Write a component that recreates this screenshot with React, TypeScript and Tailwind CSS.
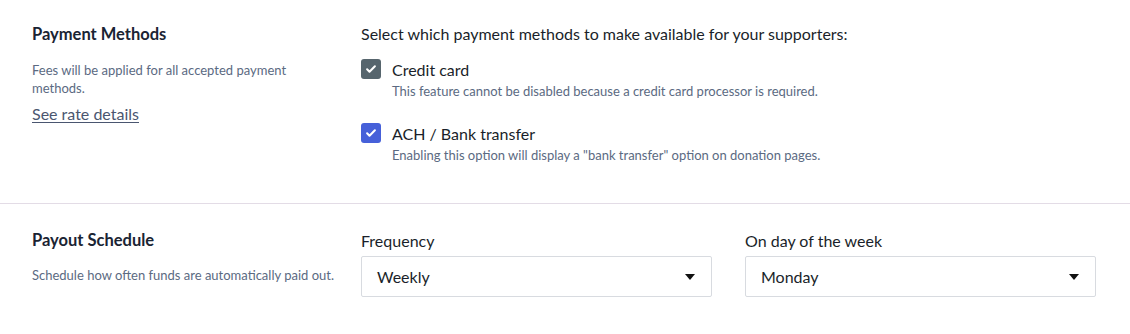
const font = { fontFamily: "'Lato', 'Liberation Sans', sans-serif" }

function CheckIcon() {
  return (
    <svg viewBox="0 0 20 20" className="w-3 h-3" fill="none">
      <path d="M3.5 10.5l4 4 9-9" stroke="white" strokeWidth="3.4" strokeLinecap="round" strokeLinejoin="round" />
    </svg>
  )
}

function Checkbox({ label, help, disabled }: { label: string; help: string; disabled?: boolean }) {
  return (
    <div className="flex gap-[11px]">
      <div
        className={`w-5 h-5 rounded-[3px] flex items-center justify-center shrink-0 ${
          disabled ? "bg-[#56656d]" : "bg-[#4660d9]"
        }`}
      >
        <CheckIcon />
      </div>
      <div>
        <div className="text-[16px] leading-[22px] text-[#1a1f2a]">{label}</div>
        <div className="text-[13px] leading-4 text-[#5b6a82] mt-[2px]">{help}</div>
      </div>
    </div>
  )
}

function Select({ label, value }: { label: string; value: string }) {
  return (
    <div className="flex-1">
      <div className="text-[16px] leading-5 text-[#1a1f2a] mb-[5px]">{label}</div>
      <div className="h-[41px] border border-[#d8dbe0] rounded-[2px] flex items-center justify-between pl-[15px] pr-[16px] bg-white">
        <span className="text-[16px] text-[#1a1f2a]">{value}</span>
        <svg viewBox="0 0 10 6" className="w-[10px] h-[6px]">
          <path d="M0 0h10L5 6z" fill="#111" />
        </svg>
      </div>
    </div>
  )
}

export default function App() {
  return (
    <div className="w-[1130px] h-[334px] bg-white overflow-hidden" style={font}>
      <div className="flex pt-[24px] pb-[40px]">
        <div className="w-[361px] pl-8 pr-8">
          <h2 className="text-[16.5px] leading-5 font-bold text-[#1a2433]">Payment Methods</h2>
          <p className="text-[13px] leading-[18px] text-[#5b6a82] mt-[17px] w-[270px]">
            Fees will be applied for all accepted payment methods.
          </p>
          <a className="inline-block mt-[7px] text-[16px] leading-5 text-[#4a5670] underline underline-offset-2">
            See rate details
          </a>
        </div>
        <div className="flex-1">
          <div className="text-[16px] leading-5 text-[#1a1f2a]">
            Select which payment methods to make available for your supporters:
          </div>
          <div className="mt-[15px] flex flex-col gap-[24px]">
            <Checkbox
              label="Credit card"
              help="This feature cannot be disabled because a credit card processor is required."
              disabled
            />
            <Checkbox
              label="ACH / Bank transfer"
              help='Enabling this option will display a "bank transfer" option on donation pages.'
            />
          </div>
        </div>
      </div>
      <div className="border-t border-[#e3dce6]" />
      <div className="flex pt-[26px]">
        <div className="w-[361px] pl-8 pr-4">
          <h2 className="text-[16.5px] leading-5 font-bold text-[#1a2433]">Payout Schedule</h2>
          <p className="text-[13px] leading-[18px] text-[#5b6a82] mt-[16px]">
            Schedule how often funds are automatically paid out.
          </p>
        </div>
        <div className="w-[735px] flex gap-[33px] pt-[1px]">
          <Select label="Frequency" value="Weekly" />
          <Select label="On day of the week" value="Monday" />
        </div>
      </div>
    </div>
  )
}
